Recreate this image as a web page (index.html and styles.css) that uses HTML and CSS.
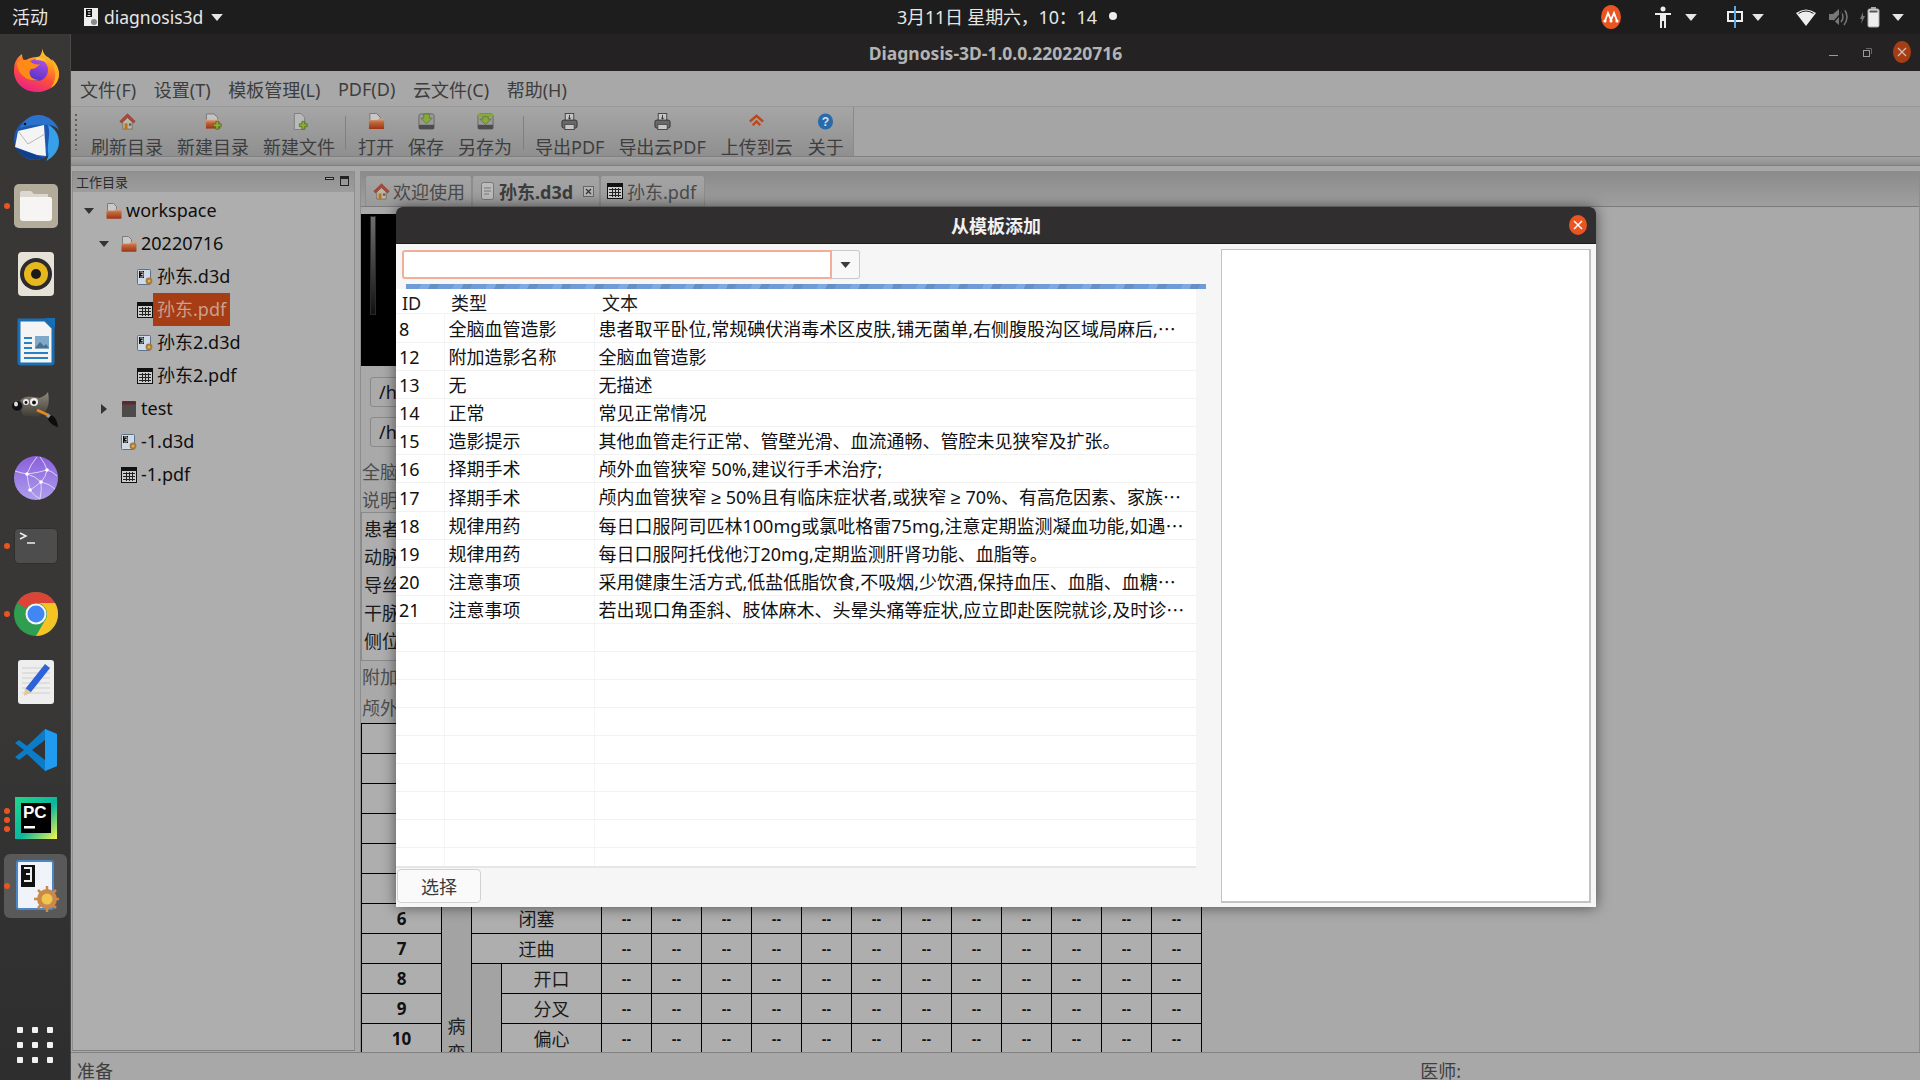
FILE: index.html
```html
<!DOCTYPE html>
<html lang="zh-CN">
<head>
<meta charset="utf-8">
<title>Diagnosis-3D</title>
<link rel="stylesheet" href="styles.css">
</head>
<body>
<svg class="defs" width="0" height="0">
  <defs>
    <linearGradient id="g-fold" x1="0" y1="0" x2="0" y2="1"><stop offset="0" stop-color="#d9a88c"/><stop offset=".35" stop-color="#c0683c"/><stop offset="1" stop-color="#9c3414"/></linearGradient>
    <symbol id="i-folder" viewBox="0 0 16 16">
      <path d="M1.500.5h6l3 3v5h-9z" fill="#c9c9c9" stroke="#7c7c7c"/>
      <path d="M.5 7.500h8l1-1.500h6v9a.8.8 0 0 1-.8.8H1.300a.8.8 0 0 1-.8-.8z" fill="url(#g-fold)"/>
    </symbol>
    <symbol id="i-d3d" viewBox="0 0 16 16">
      <rect x=".5" y=".5" width="13" height="15" rx="1" fill="#cfdbe6" stroke="#5c7088"/>
      <rect x="2" y="2" width="5" height="7" fill="#111"/>
      <path d="M3 3h3v5H3M4 5.500h2" stroke="#ddd" fill="none" stroke-width=".8"/>
      <circle cx="12" cy="12" r="3.400" fill="#a8793a"/>
      <circle cx="12" cy="12" r="1.500" fill="#d9b060"/>
    </symbol>
    <symbol id="i-pdf" viewBox="0 0 16 16">
      <rect x=".5" y=".5" width="15" height="15" fill="#ccc" stroke="#111"/>
      <rect x="1" y="1" width="14" height="3" fill="#111"/>
      <path d="M2 6.500h12M2 9.500h12M2 12.500h12M5.500 5v9M8.500 5v9M11.500 5v9" stroke="#222" fill="none"/>
    </symbol>
    <symbol id="i-home" viewBox="0 0 18 18">
      <path d="M4 9.500 9 5l5 4.500V17H4z" fill="#bdb5a5" stroke="#6e675c" stroke-width=".8"/>
      <path d="M9 .8.800 8.800l1.800 1.700L9 4.600l6.400 5.900 1.800-1.700z" fill="#b0453a" stroke="#8a3026" stroke-width=".5"/>
      <rect x="6" y="11" width="3" height="6" fill="#b8741a"/>
      <rect x="10.500" y="11" width="2.500" height="2.500" fill="#5e5e5e"/>
    </symbol>
    <symbol id="i-plus" viewBox="0 0 10 10">
      <path d="M3.500.8h3v2.700h2.700v3H6.500v2.700h-3V6.500H.8v-3h2.700z" fill="#8fa83a" stroke="#4e6a18" stroke-width=".8"/>
    </symbol>
    <symbol id="i-printer" viewBox="0 0 18 18">
      <rect x="4.500" y=".5" width="9" height="8" fill="#c6c6c6" stroke="#444"/>
      <rect x="1" y="7.500" width="16" height="8.500" rx="2" fill="#6a6a6a" stroke="#333"/>
      <rect x="4" y="12" width="10" height="5.500" fill="#c6c6c6" stroke="#444"/>
      <path d="M9 2v4.500M7.500 5 9 6.500 10.500 5" stroke="#333" fill="none"/>
    </symbol>
    <symbol id="i-arrow" viewBox="0 0 10 6">
      <path d="M0 0h10L5 6z"/>
    </symbol>
  </defs>
</svg>

<header class="topbar">
  <span class="activities">活动</span>
  <span class="app-menu">
    <svg class="app-icon" width="14" height="18" viewBox="0 0 14 18"><rect width="14" height="18" fill="#eee"/><rect x="2" y="1" width="6" height="8" fill="#111"/><path d="M3.500 2.500h3M4 5h2.500M3.500 7.500h3" stroke="#eee" fill="none"/><circle cx="10" cy="14" r="3" fill="#8a8a8a"/></svg>
    <span class="app-name">diagnosis3d</span>
    <svg class="caret" width="12" height="7"><use href="#i-arrow"/></svg>
  </span>
  <span class="clock">3月11日 星期六，10：14<i class="clock-dot"></i></span>
  <span class="tray">
    <svg class="tray-m" width="20" height="24" viewBox="0 0 20 24"><ellipse cx="10" cy="12" rx="10" ry="12" fill="#e95420"/><path d="M4 16 7 8l3 7 3-7 3 8" stroke="#fff" stroke-width="1.800" fill="none"/><path d="M7 8l3 7M13 8l-3 7" stroke="#fff" stroke-width="1"/><circle cx="4" cy="16" r="1.600" fill="#fff"/><circle cx="10" cy="16" r="1.600" fill="#fff"/><circle cx="16" cy="16" r="1.600" fill="#fff"/></svg>
    <svg class="tray-a" width="16" height="22" viewBox="0 0 16 22"><circle cx="8" cy="3" r="2.500" fill="#eee"/><path d="M0 7h16v2h-5v13H9v-7H7v7H5V9H0z" fill="#eee"/></svg>
    <svg class="caret" width="12" height="7"><use href="#i-arrow"/></svg>
    <svg class="tray-zh" width="16" height="22" viewBox="0 0 16 22"><rect x="1" y="6" width="14" height="9" fill="none" stroke="#eee" stroke-width="2"/><path d="M8 0v22" stroke="#5aa9e6" stroke-width="2"/></svg>
    <svg class="caret" width="12" height="7"><use href="#i-arrow"/></svg>
    <svg class="tray-w" width="20" height="18" viewBox="0 0 20 18"><path d="M0 5Q10-2 20 5L10 18z" fill="#eee"/><path d="M2.500 5.500Q10 .5 17.500 5.500" stroke="#1d1d1d" fill="none"/></svg>
    <svg class="tray-v" width="20" height="20" viewBox="0 0 20 20"><path d="M0 7h4l6-5v16l-6-5H0z" fill="#777"/><path d="M12 5q4 5 0 10M15 2q6 8 0 16" stroke="#777" stroke-width="1.500" fill="none"/><path d="M1 19 17 1" stroke="#1d1d1d" stroke-width="1.500"/></svg>
    <svg class="tray-b" width="22" height="22" viewBox="0 0 22 22"><path d="M4 6 1 13h2l-1 5 4-8H4z" fill="#777"/><rect x="9" y="3" width="11" height="18" rx="1.500" fill="#eee" stroke="#aaa"/><rect x="12" y="1" width="5" height="2" fill="#aaa"/><rect x="10.500" y="4.500" width="8" height="2" fill="#555"/></svg>
    <svg class="caret" width="12" height="7"><use href="#i-arrow"/></svg>
  </span>
</header>

<div class="desk">
  <nav class="dock">
    <div class="dock-item dock-first">
      <svg width="45" height="46" viewBox="0 0 45 46">
        <defs>
          <linearGradient id="ff" x1=".75" y1="0" x2=".35" y2="1"><stop offset="0" stop-color="#ffe04a"/><stop offset=".35" stop-color="#ff9a1e"/><stop offset=".65" stop-color="#ff4f3a"/><stop offset="1" stop-color="#e8208a"/></linearGradient>
          <linearGradient id="ff2" x1=".6" y1="0" x2=".3" y2="1"><stop offset="0" stop-color="#ab4fe0"/><stop offset="1" stop-color="#5330c8"/></linearGradient>
        </defs>
        <path d="M29 0c-1 4 0 7 3 10 7 4 12 10 13 18 0 10-10 18-22 18C10 46 0 37 0 25c0-6 1-9 3-12 1-2 5-5 5-5 0 3 1 6 3 7 3-3 8-4 12-4 3 0 5-3 6-11z" fill="url(#ff)"/>
        <path d="M38 13c5 5 7 10 7 15 0 6-3 11-8 14 3-5 5-10 4-16-1-4-2-9-3-13z" fill="#ffb31f"/>
        <circle cx="23" cy="24" r="11" fill="url(#ff2)"/>
        <path d="M3 17c5-4 11-4 14-1 2 2 6 3 9 2-2 3-6 5-9 5-2 2-2 5 0 8 2 2 5 3 8 3-8 2-16-2-20-9-1-3-2-5-2-8z" fill="#ff8a18"/>
        <path d="M23 11c4 0 9 2 11 6-3-2-8-3-12-3-1-1 0-2 1-3z" fill="#ffc12e"/>
      </svg>
    </div>
    <div class="dock-item">
      <svg width="48" height="48" viewBox="0 0 48 48">
        <circle cx="23" cy="25" r="21" fill="#1c57b0"/>
        <path d="M8 14C11 6 19 0 28 1c9 1 16 7 19 15-4-4-9-6-14-5-8-1-17 0-25 3z" fill="#2a72cc"/>
        <path d="M36 11c7 3 11 10 11 17 0 8-5 15-13 19 2-3 3-6 2-9-1-9 3-18 0-27z" fill="#36a0e8"/>
        <path d="M6 17l26-6 2 31-9-1L3 33z" fill="#f4f4f4"/>
        <path d="M6 17l10 13 17-10" stroke="#b8b8b8" fill="none"/>
        <circle cx="13" cy="10" r="1.300" fill="#111"/>
        <path d="M4 35c4 6 11 10 20 11l8-2-8-3-20-7z" fill="#123f8c"/>
      </svg>
    </div>
    <div class="dock-item active-dot">
      <svg width="44" height="44" viewBox="0 0 44 44">
        <rect width="44" height="44" rx="5" fill="#b3ac9b"/>
        <path d="M6 9a2 2 0 0 1 2-2h9l3 3h14v6H6z" fill="#dcd8d0"/>
        <path d="M6 13h30a2 2 0 0 1 2 2v19a3 3 0 0 1-3 3H9a3 3 0 0 1-3-3z" fill="#f6f5f3"/>
      </svg>
    </div>
    <div class="dock-item">
      <svg width="36" height="44" viewBox="0 0 36 44">
        <rect width="36" height="44" rx="4" fill="#e6e2d8"/>
        <circle cx="18" cy="22" r="16" fill="#2b2b2b"/>
        <circle cx="18" cy="22" r="12" fill="#e6b81e"/>
        <circle cx="18" cy="22" r="5" fill="#1a1a1a"/>
      </svg>
    </div>
    <div class="dock-item">
      <svg width="38" height="48" viewBox="0 0 38 48">
        <path d="M2 2h26l8 8v34a2 2 0 0 1-2 2H4a2 2 0 0 1-2-2z" fill="#f4f4f4" stroke="#1a6fb4" stroke-width="3"/>
        <path d="M28 0h10v10z" fill="#1a6fb4"/>
        <path d="M7 20h8M7 25h8M7 30h8M7 35h24M7 40h24" stroke="#2b7fc2" stroke-width="2"/>
        <rect x="18" y="18" width="14" height="13" fill="#7fa9c9"/>
        <path d="M18 30l5-6 4 4 2-2 3 4z" fill="#4a6f8e"/>
      </svg>
    </div>
    <div class="dock-item">
      <svg width="48" height="36" viewBox="0 0 48 36">
        <defs><linearGradient id="gm" x1="0" y1="0" x2="0" y2="1"><stop offset="0" stop-color="#8f897a"/><stop offset="1" stop-color="#3e3c36"/></linearGradient></defs>
        <path d="M8 9C12 3 22 5 27 6c4-1 7-3 9-6 1 6 2 13-3 20-6 6-17 6-23 2z" fill="url(#gm)"/>
        <circle cx="5" cy="14" r="5.500" fill="#111" stroke="#444"/>
        <ellipse cx="4" cy="12" rx="2" ry="2.500" fill="#ddd"/>
        <circle cx="14" cy="10" r="3" fill="#e8e8e8"/><circle cx="14" cy="10.500" r="1.400" fill="#111"/>
        <circle cx="22" cy="10" r="4" fill="#eee"/><circle cx="22" cy="10.500" r="1.900" fill="#111"/>
        <path d="M25 18l11 5" stroke="#e08a1e" stroke-width="3"/>
        <path d="M35 23l5 3" stroke="#999" stroke-width="3.500"/>
        <path d="M39 23c3 1 6 4 7 12-5-1-9-5-10-8z" fill="#0d0d0d"/>
      </svg>
    </div>
    <div class="dock-item">
      <svg width="44" height="44" viewBox="0 0 44 44">
        <defs><linearGradient id="net" x1="0" y1="0" x2="0" y2="1"><stop offset="0" stop-color="#8a5fdb"/><stop offset="1" stop-color="#ae9eee"/></linearGradient></defs>
        <circle cx="22" cy="22" r="22" fill="url(#net)"/>
        <path d="M1 15q6 2 12 3 10-1 20-4 5 1 10 6M13 18q3-9 10-17M33 14q-2-7-7-13M13 18q1 9 3 16M33 14q-1 7-6 12Q21 31 16 34M13 18q8 2 14 8 9 2 14 7M16 34q4 6 10 9M27 26q1 8-1 17" stroke="#e4dff4" stroke-width=".9" fill="none"/>
        <circle cx="13" cy="18" r="1.800" fill="#fff"/><circle cx="33" cy="14" r="1.800" fill="#fff"/><circle cx="27" cy="26" r="1.800" fill="#fff"/><circle cx="16" cy="34" r="1.800" fill="#fff"/>
      </svg>
    </div>
    <div class="dock-item active-dot">
      <svg width="44" height="36" viewBox="0 0 44 36">
        <rect x=".5" y=".5" width="43" height="35" rx="4" fill="#4d4d4d" stroke="#2f2f2f"/>
        <path d="M6 5l6 3-6 3" stroke="#eee" stroke-width="1.500" fill="none"/>
        <path d="M13 15h8" stroke="#eee" stroke-width="1.500"/>
      </svg>
    </div>
    <div class="dock-item active-dot">
      <svg width="44" height="44" viewBox="0 0 44 44">
        <circle cx="22" cy="22" r="22" fill="#2f9e50"/>
        <path d="M22 0a22 22 0 0 1 19.050 11H22a11 11 0 0 0-9.530 5.500L2.950 11A22 22 0 0 1 22 0z" fill="#db4437"/>
        <path d="M22 11h19.050A22 22 0 0 1 22 44l9.530-16.500A11 11 0 0 0 22 11z" fill="#f6c324"/>
        <circle cx="22" cy="22" r="10.500" fill="#f5f5f5"/>
        <circle cx="22" cy="22" r="8.500" fill="#4285f4"/>
      </svg>
    </div>
    <div class="dock-item">
      <svg width="36" height="44" viewBox="0 0 36 44">
        <rect width="36" height="44" rx="3" fill="#eee"/>
        <path d="M4 8h28M4 13h28M4 18h28M4 23h28M4 28h28M4 33h28" stroke="#cfcfcf"/>
        <path d="M27 4l5 4-19 24-6 3 1-7z" fill="#2d62d8"/>
        <path d="M7 28l6 4-7 4z" fill="#e7c89a"/>
      </svg>
    </div>
    <div class="dock-item">
      <svg width="42" height="42" viewBox="0 0 42 42">
        <path d="M30 0 42 5v32l-12 5L12 25 4 31 0 28l9-7-9-7 4-3 8 6z" fill="#0a7cc8"/>
        <path d="M30 0 42 5v32l-12 5z" fill="#1f9cf0"/>
        <path d="M30 11v20l-13-10z" fill="#333"/>
      </svg>
    </div>
    <div class="dock-item dots-3">
      <svg width="42" height="42" viewBox="0 0 42 42">
        <defs><linearGradient id="pc" x1="0" y1="0" x2="1" y2="1"><stop offset="0" stop-color="#21d789"/><stop offset=".55" stop-color="#09b6a0"/><stop offset="1" stop-color="#fcf84a"/></linearGradient></defs>
        <rect width="42" height="42" fill="url(#pc)"/>
        <rect x="6" y="6" width="30" height="30" fill="#000"/>
        <text x="8" y="21" class="pc-text">PC</text>
        <rect x="9" y="29" width="11" height="2.500" fill="#fff"/>
      </svg>
    </div>
    <div class="dock-item dock-active active-dot">
      <svg width="44" height="54" viewBox="0 0 44 54">
        <rect x="2" y="2" width="36" height="48" rx="2" fill="#f0f4fa" stroke="#4a86c8" stroke-width="2"/>
        <rect x="6" y="6" width="14" height="22" fill="#111"/>
        <path d="M9 9h7v13H9M11 15h5" stroke="#eee" stroke-width="2" fill="none"/>
        <circle cx="32" cy="40" r="10" fill="#c9894a"/>
        <circle cx="32" cy="40" r="5.500" fill="#f2c550"/>
        <path d="M32 27v6M32 47v6M19 40h6M39 40h5M23 31l4 4M37 45l4 4M41 31l-4 4M27 45l-4 4" stroke="#c9894a" stroke-width="2.500"/>
      </svg>
    </div>
    <div class="dock-grid" aria-hidden="true">
      <i></i><i></i><i></i><i></i><i></i><i></i><i></i><i></i><i></i>
    </div>
  </nav>

  <main class="window">
    <div class="titlebar">
      <span class="title">Diagnosis-3D-1.0.0.220220716</span>
      <span class="wm-buttons">
        <i class="wm-min"></i>
        <svg class="wm-max" width="9" height="9" viewBox="0 0 9 9"><rect x=".5" y="2.500" width="6" height="6" fill="none" stroke="#9a9a9a"/><path d="M3 .5h5.500V6" fill="none" stroke="#666"/></svg>
        <svg class="wm-close" width="18" height="22" viewBox="0 0 18 22"><ellipse cx="9" cy="11" rx="9" ry="11" fill="#a63d14"/><path d="M5 7l8 8M13 7l-8 8" stroke="#c9c0ba" stroke-width="1.300"/></svg>
      </span>
    </div>

    <div class="menubar">
      <span>文件(F)</span><span>设置(T)</span><span>模板管理(L)</span><span>PDF(D)</span><span>云文件(C)</span><span>帮助(H)</span>
    </div>

    <div class="toolrow">
      <div class="toolbar">
        <i class="handle"></i>
        <div class="tool"><svg viewBox="0 0 18 18"><use href="#i-home"/></svg><span>刷新目录</span></div>
        <div class="tool"><svg viewBox="0 0 18 18"><path d="M1.500 1h8l4 4v4h-12z" fill="#c3c3c3" stroke="#777"/><path d="M1 7h15v9.500H1z" fill="url(#g-fold)"/><use href="#i-plus" x="8" y="8" width="10" height="10"/></svg><span>新建目录</span></div>
        <div class="tool"><svg viewBox="0 0 18 18"><path d="M3.500.5h7l4 4v13h-11z" fill="#b9b9b9" stroke="#7d7d7d"/><use href="#i-plus" x="8" y="8" width="10" height="10"/></svg><span>新建文件</span></div>
        <i class="tool-sep"></i>
        <div class="tool"><svg viewBox="0 0 18 18"><path d="M2 .5h7l4 4v5H2z" fill="#c8c8c8" stroke="#777"/><path d="M1 7.500h9l1-1.500h6v11H1z" fill="url(#g-fold)"/></svg><span>打开</span></div>
        <div class="tool"><svg viewBox="0 0 18 18"><rect x="1" y="1" width="16" height="16" rx="2" fill="#9a9a9a" stroke="#666"/><rect x="1" y="12.500" width="16" height="4.500" fill="#4c4c4c"/><path d="M6 1h6v4.500h3L9 11.500 3 5.500h3z" fill="#86a83c" stroke="#4e6a18" stroke-width=".6"/></svg><span>保存</span></div>
        <div class="tool"><svg viewBox="0 0 18 18"><rect x="1" y="1" width="16" height="16" rx="2" fill="#9a9a9a" stroke="#666"/><rect x="1" y="12.500" width="16" height="4.500" fill="#4c4c4c"/><rect x="1" y="1" width="16" height="3" fill="#86a83c"/><path d="M6 4h6v2.500h3L9 12 3 6.500h3z" fill="#86a83c" stroke="#4e6a18" stroke-width=".6"/></svg><span>另存为</span></div>
        <i class="tool-sep sep-b"></i>
        <div class="tool"><svg viewBox="0 0 18 18"><use href="#i-printer"/></svg><span>导出PDF</span></div>
        <div class="tool"><svg viewBox="0 0 18 18"><use href="#i-printer"/></svg><span>导出云PDF</span></div>
        <div class="tool tool-nudge"><svg viewBox="0 0 18 18"><path d="M2 9l7-6 7 6M5 13l4-4 4 4" stroke="#b9481c" stroke-width="2.500" fill="none"/></svg><span>上传到云</span></div>
        <div class="tool tool-nudge"><svg viewBox="0 0 18 18"><ellipse cx="9" cy="9" rx="8" ry="8.500" fill="#2a6aa8"/><text x="9" y="14" class="q-text">?</text></svg><span>关于</span></div>
      </div>
    </div>
    <div class="strip"></div>

    <div class="panes">
      <aside class="side">
        <div class="side-head">
          <span>工作目录</span>
          <span class="side-btns"><i class="btn-min"></i><i class="btn-max"></i></span>
        </div>
        <ul class="tree">
          <li class="row lv0"><i class="tw open"></i><svg width="16" height="16"><use href="#i-folder"/></svg><span class="lbl">workspace</span></li>
          <li class="row lv1"><i class="tw open"></i><svg width="16" height="16"><use href="#i-folder"/></svg><span class="lbl">20220716</span></li>
          <li class="row lv2"><i class="tw"></i><svg width="16" height="16"><use href="#i-d3d"/></svg><span class="lbl">孙东.d3d</span></li>
          <li class="row lv2"><i class="tw"></i><svg width="16" height="16"><use href="#i-pdf"/></svg><span class="lbl sel">孙东.pdf</span></li>
          <li class="row lv2"><i class="tw"></i><svg width="16" height="16"><use href="#i-d3d"/></svg><span class="lbl">孙东2.d3d</span></li>
          <li class="row lv2"><i class="tw"></i><svg width="16" height="16"><use href="#i-pdf"/></svg><span class="lbl">孙东2.pdf</span></li>
          <li class="row lv1"><i class="tw closed"></i><svg width="16" height="18" viewBox="0 0 16 18"><path d="M1 2h12l2 2v13H1z" fill="#4e4a4a"/><rect x="1" y="1" width="14" height="3.500" rx="1" fill="#5a2a30"/></svg><span class="lbl">test</span></li>
          <li class="row lv1"><i class="tw"></i><svg width="16" height="16"><use href="#i-d3d"/></svg><span class="lbl">-1.d3d</span></li>
          <li class="row lv1"><i class="tw"></i><svg width="16" height="16"><use href="#i-pdf"/></svg><span class="lbl">-1.pdf</span></li>
        </ul>
      </aside>

      <section class="editor">
        <div class="tabs">
          <div class="tab t1"><svg width="17" height="17" viewBox="0 0 18 18"><use href="#i-home"/></svg><span>欢迎使用</span></div>
          <div class="tab t2"><svg width="13" height="18" viewBox="0 0 13 18"><rect x=".5" y=".5" width="12" height="17" rx="2" fill="#bbb" stroke="#777"/><path d="M3 6h7M3 9h7M3 12h5" stroke="#777"/></svg><b>孙东.d3d</b><svg class="tab-x" width="11" height="11" viewBox="0 0 11 11"><rect x=".5" y=".5" width="10" height="10" fill="#b5b5b5" stroke="#666"/><path d="M3 3l5 5M8 3l-5 5" stroke="#333" stroke-width="1.300"/></svg></div>
          <div class="tab t3"><svg width="16" height="16"><use href="#i-pdf"/></svg><span>孙东.pdf</span></div>
        </div>
        <div class="doc">
          <div class="viewer"><i class="slider"></i></div>
          <div class="path-in">/home</div>
          <div class="path-in">/home</div>
          <div class="doc-label">全脑血管造影</div>
          <div class="doc-label">说明</div>
          <div class="doc-area">
            <p>患者取平卧位</p><p>动脉穿刺成功</p><p>导丝引导下</p><p>干脉造影</p><p>侧位造影</p>
          </div>
          <div class="doc-label">附加造影</div>
          <div class="doc-label">颅外血管</div>
          <table class="grid">
            <colgroup>
              <col class="c-n"><col class="c-g"><col class="c-s"><col class="c-t">
              <col class="c-v"><col class="c-v"><col class="c-v"><col class="c-v"><col class="c-v"><col class="c-v"><col class="c-v"><col class="c-v"><col class="c-v"><col class="c-v"><col class="c-v"><col class="c-v">
            </colgroup>
            <tr><th></th><th></th><th colspan="2"></th><td></td><td></td><td></td><td></td><td></td><td></td><td></td><td></td><td></td><td></td><td></td><td></td></tr>
            <tr><th>1</th><td class="merged" rowspan="10"><div class="merged-in">病<br>变</div></td><td colspan="2"></td><td>--</td><td>--</td><td>--</td><td>--</td><td>--</td><td>--</td><td>--</td><td>--</td><td>--</td><td>--</td><td>--</td><td>--</td></tr>
            <tr><th>2</th><td colspan="2"></td><td>--</td><td>--</td><td>--</td><td>--</td><td>--</td><td>--</td><td>--</td><td>--</td><td>--</td><td>--</td><td>--</td><td>--</td></tr>
            <tr><th>3</th><td colspan="2"></td><td>--</td><td>--</td><td>--</td><td>--</td><td>--</td><td>--</td><td>--</td><td>--</td><td>--</td><td>--</td><td>--</td><td>--</td></tr>
            <tr><th>4</th><td colspan="2"></td><td>--</td><td>--</td><td>--</td><td>--</td><td>--</td><td>--</td><td>--</td><td>--</td><td>--</td><td>--</td><td>--</td><td>--</td></tr>
            <tr><th>5</th><td colspan="2"></td><td>--</td><td>--</td><td>--</td><td>--</td><td>--</td><td>--</td><td>--</td><td>--</td><td>--</td><td>--</td><td>--</td><td>--</td></tr>
            <tr><th>6</th><td class="nm" colspan="2">闭塞</td><td>--</td><td>--</td><td>--</td><td>--</td><td>--</td><td>--</td><td>--</td><td>--</td><td>--</td><td>--</td><td>--</td><td>--</td></tr>
            <tr><th>7</th><td class="nm" colspan="2">迂曲</td><td>--</td><td>--</td><td>--</td><td>--</td><td>--</td><td>--</td><td>--</td><td>--</td><td>--</td><td>--</td><td>--</td><td>--</td></tr>
            <tr><th>8</th><td class="merged" rowspan="3"></td><td class="nm">开口</td><td>--</td><td>--</td><td>--</td><td>--</td><td>--</td><td>--</td><td>--</td><td>--</td><td>--</td><td>--</td><td>--</td><td>--</td></tr>
            <tr><th>9</th><td class="nm">分叉</td><td>--</td><td>--</td><td>--</td><td>--</td><td>--</td><td>--</td><td>--</td><td>--</td><td>--</td><td>--</td><td>--</td><td>--</td></tr>
            <tr><th>10</th><td class="nm">偏心</td><td>--</td><td>--</td><td>--</td><td>--</td><td>--</td><td>--</td><td>--</td><td>--</td><td>--</td><td>--</td><td>--</td><td>--</td></tr>
          </table>
        </div>
      </section>
    </div>

    <footer class="status"><span>准备</span><span class="doctor">医师:</span></footer>
  </main>
</div>

<div class="dialog">
  <div class="dlg-title">
    <span>从模板添加</span>
    <svg class="dlg-close" width="18" height="20" viewBox="0 0 18 20"><ellipse cx="9" cy="10" rx="9" ry="10" fill="#e95420"/><path d="M5 6l8 8M13 6l-8 8" stroke="#fff" stroke-width="1.500"/></svg>
  </div>
  <div class="dlg-body">
    <div class="dlg-left">
      <div class="combo">
        <div class="combo-input"></div>
        <div class="combo-btn"><svg width="11" height="6"><use href="#i-arrow"/></svg></div>
      </div>
      <div class="progress"></div>
      <div class="list">
        <table class="tpl">
          <colgroup><col class="k-id"><col class="k-type"><col class="k-text"></colgroup>
          <thead><tr><th>ID</th><th>类型</th><th>文本</th></tr></thead>
          <tbody>
            <tr><td>8</td><td>全脑血管造影</td><td>患者取平卧位,常规碘伏消毒术区皮肤,铺无菌单,右侧腹股沟区域局麻后,⋯</td></tr>
            <tr><td>12</td><td>附加造影名称</td><td>全脑血管造影</td></tr>
            <tr><td>13</td><td>无</td><td>无描述</td></tr>
            <tr><td>14</td><td>正常</td><td>常见正常情况</td></tr>
            <tr><td>15</td><td>造影提示</td><td>其他血管走行正常、管壁光滑、血流通畅、管腔未见狭窄及扩张。</td></tr>
            <tr><td>16</td><td>择期手术</td><td>颅外血管狭窄 50%,建议行手术治疗;</td></tr>
            <tr><td>17</td><td>择期手术</td><td>颅内血管狭窄 <span class="ge">≥</span> 50%且有临床症状者,或狭窄 <span class="ge">≥</span> 70%、有高危因素、家族⋯</td></tr>
            <tr><td>18</td><td>规律用药</td><td>每日口服阿司匹林100mg或氯吡格雷75mg,注意定期监测凝血功能,如遇⋯</td></tr>
            <tr><td>19</td><td>规律用药</td><td>每日口服阿托伐他汀20mg,定期监测肝肾功能、血脂等。</td></tr>
            <tr><td>20</td><td>注意事项</td><td>采用健康生活方式,低盐低脂饮食,不吸烟,少饮酒,保持血压、血脂、血糖⋯</td></tr>
            <tr><td>21</td><td>注意事项</td><td>若出现口角歪斜、肢体麻木、头晕头痛等症状,应立即赴医院就诊,及时诊⋯</td></tr>
            <tr><td></td><td></td><td></td></tr>
            <tr><td></td><td></td><td></td></tr>
            <tr><td></td><td></td><td></td></tr>
            <tr><td></td><td></td><td></td></tr>
            <tr><td></td><td></td><td></td></tr>
            <tr><td></td><td></td><td></td></tr>
            <tr><td></td><td></td><td></td></tr>
            <tr><td></td><td></td><td></td></tr>
            <tr><td></td><td></td><td></td></tr>
          </tbody>
        </table>
      </div>
      <div class="dlg-actions"><button class="choose" type="button">选择</button></div>
    </div>
    <div class="preview"></div>
  </div>
</div>
</body>
</html>
```

FILE: styles.css
```css
* { box-sizing: border-box; }
html, body { margin: 0; padding: 0; }
body {
  width: 1920px;
  height: 1080px;
  overflow: hidden;
  position: relative;
  background: #1d1d1d;
  font-family: "Noto Sans", "Noto Sans CJK SC", sans-serif;
  font-size: 18px;
  color: #111;
}
i { display: block; font-style: normal; }
.defs { position: absolute; }
svg { display: block; flex: none; }

/* top bar */
.topbar {
  height: 34px;
  background: #1d1d1d;
  color: #e6e6e6;
  display: flex;
  align-items: center;
  position: relative;
  line-height: 34px;
}
.activities { margin-left: 12px; width: 72px; }
.app-menu { display: flex; align-items: center; }
.app-icon { margin-right: 6px; }
.app-name { font-size: 17.5px; margin-right: 8px; }
.caret { fill: #e6e6e6; }
.clock {
  position: absolute;
  left: 897px;
  display: flex;
  align-items: center;
  letter-spacing: -0.2px;
}
.clock-dot {
  width: 8px; height: 8px; border-radius: 50%;
  background: #eee; margin-left: 12px; margin-top: -3px;
}
.tray { margin-left: auto; display: flex; align-items: center; padding-right: 16px; }
.tray-m { margin-right: 34px; }
.tray-a { margin-right: 14px; }
.tray-zh { margin-left: 30px; margin-right: 9px; }
.tray-w { margin-left: 32px; }
.tray-v { margin-left: 13px; }
.tray-b { margin-left: 10px; margin-right: 11px; }

/* desk */
.desk { display: flex; height: 1046px; }
.dock {
  width: 71px;
  flex: none;
  background: linear-gradient(180deg, #383736 0, #383736 65%, #323232 80%, #2f2e2e 100%);
  display: flex;
  flex-direction: column;
  padding-top: 2px;
  border-right: 1px solid #4a4a4a;
}
.dock-item {
  height: 68px;
  flex: none;
  display: flex;
  align-items: center;
  justify-content: center;
  position: relative;
  padding-left: 2px;
}
.dock-first { padding-bottom: 2px; }
.active-dot::before {
  content: "";
  position: absolute;
  left: 4px; top: 31px;
  width: 6px; height: 6px;
  border-radius: 50%;
  background: #e95420;
}
.dots-3::before {
  content: "";
  position: absolute;
  left: 4px; top: 24px;
  width: 6px; height: 6px;
  border-radius: 50%;
  background: #e95420;
  box-shadow: 0 9px 0 #e95420, 0 18px 0 #e95420;
}
.dock-active { background: #595959; border-radius: 6px; margin: 2px 3px 2px 4px; height: 64px; }
.dock-active::before { left: 0; top: 29px; }
.pc-text { font: 700 17px "Liberation Sans", sans-serif; fill: #fff; }
.q-text { font: 700 13px "Liberation Sans", sans-serif; fill: #cfe0f0; text-anchor: middle; }
.dock-grid {
  margin-top: auto;
  margin-bottom: 17px;
  align-self: center;
  display: grid;
  grid-template-columns: repeat(3, 6px);
  gap: 9px;
}
.dock-grid i { width: 6px; height: 6px; background: #f2f2f2; border-radius: 1px; }

/* window */
.window { flex: 1; display: flex; flex-direction: column; min-width: 0; background: #a8a8a8; }
.titlebar {
  height: 37px;
  background: #242223;
  position: relative;
  display: flex;
  align-items: center;
  justify-content: center;
}
.title { font-size: 17.5px; font-weight: 700; color: #b4b4b4; }
.wm-buttons {
  position: absolute;
  right: 9px; top: 7px;
  display: flex; align-items: center;
}
.wm-min { width: 9px; height: 1px; background: #9a9a9a; margin-right: 25px; margin-top: 6px; }
.wm-max { margin-right: 21px; }

.menubar {
  height: 36px;
  background: #a8a8a8;
  display: flex;
  align-items: center;
  gap: 17.6px;
  padding-left: 9px;
  color: #3d3d3d;
  border-bottom: 1px solid #989898;
}
.toolrow { height: 50px; background: #a5a5a5; border-bottom: 1px solid #808080; }
.toolbar {
  width: 783px;
  height: 49px;
  background: linear-gradient(180deg, #a6a6a6, #8f8f8f);
  border-right: 1px solid #8a8a8a;
  display: flex;
  align-items: flex-start;
  color: #3e3e3e;
}
.handle { width: 13px; height: 36px; margin-top: 7px; background: repeating-linear-gradient(180deg, #5e5e5e 0 2px, transparent 2px 5px) 4px 0 / 2px 100% no-repeat; }
.tool { padding: 6px 7px 0; display: flex; flex-direction: column; align-items: center; height: 49px; white-space: nowrap; }
.tool-nudge { margin-left: 1px; }
.tool svg { width: 17px; height: 17px; }
.tool span { line-height: 24px; margin-top: 5px; }
.tool-sep { width: 1px; height: 34px; margin: 9px 5px 0 3px; background: #808080; }
.sep-b { margin-left: 4px; margin-right: 4px; }
.strip {
  height: 9px;
  background: linear-gradient(180deg, #a2a2a2, #8f8f8f);
  border-bottom: 1px solid #7f7f7f;
}

.panes { flex: 1; display: flex; min-height: 0; padding-top: 5px; gap: 5px; padding-left: 1px; }
.side {
  width: 283px;
  flex: none;
  background: #aeaeae;
  border: 1px solid #8d8d8d;
  border-bottom-color: #808080;
  margin-bottom: 1px;
}
.side-head {
  height: 20px;
  background: linear-gradient(180deg, #919191, #9d9d9d);
  display: flex;
  align-items: center;
  justify-content: space-between;
  padding: 0 5px 2px 3px;
  font-size: 13px;
  color: #2a2a2a;
}
.side-btns { display: flex; align-items: center; gap: 6px; }
.btn-min { width: 9px; height: 3px; border: 1px solid #222; background: #aaa; margin-top: -6px; }
.btn-max { width: 9px; height: 10px; border: 1px solid #222; border-top-width: 3px; }
.tree { list-style: none; margin: 2px 0 0; padding: 0; }
.row { height: 33px; display: flex; align-items: center; }
.lv0 { padding-left: 7px; }
.lv1 { padding-left: 22px; }
.lv2 { padding-left: 38px; }
.tw { width: 26px; height: 10px; flex: none; position: relative; }
.tw.open::before {
  content: ""; position: absolute; left: 4px; top: 2px;
  border-left: 5px solid transparent; border-right: 5px solid transparent; border-top: 6px solid #333;
}
.tw.closed::before {
  content: ""; position: absolute; left: 6px; top: 0;
  border-top: 5px solid transparent; border-bottom: 5px solid transparent; border-left: 6px solid #333;
}
.lbl { padding: 0 4px; height: 33px; line-height: 33px; white-space: nowrap; color: #0f0f0f; }
.lbl.sel { background: #a63d14; color: #caa090; }

/* editor */
.editor { flex: 1; min-width: 0; border: 1px solid #8d8d8d; border-bottom: 0; display: flex; flex-direction: column; }
.tabs {
  height: 35px;
  flex: none;
  background: linear-gradient(180deg, #8b8b8b, #9f9f9f);
  border-bottom: 1px solid #7b7b7b;
  display: flex;
  align-items: flex-end;
  padding-left: 4px;
  box-shadow: 0 2px 0 #9a9a9a, 0 3px 0 #7e7e7e;
}
.tab {
  height: 31px;
  display: flex;
  align-items: center;
  border: 1px solid #8c8c8c;
  border-bottom: 0;
  border-radius: 3px 3px 0 0;
  background: linear-gradient(180deg, #a4a4a4, #9a9a9a);
  color: #4a4a4a;
  white-space: nowrap;
  flex: none;
}
.t1 { width: 107px; padding-left: 7px; gap: 3px; }
.t2 { width: 128px; padding-left: 8px; gap: 5px; color: #3c3c3c; }
.t2 b { font-weight: 700; }
.tab-x { margin-left: auto; margin-right: 5px; }
.t3 { width: 105px; padding-left: 6px; gap: 4px; }

.doc { flex: 1; min-height: 0; overflow: hidden; background: #a9a9a9; padding-top: 7px; }
.viewer { width: 600px; height: 152px; background: #000; position: relative; }
.slider {
  position: absolute; left: 9px; top: 2px;
  width: 6px; height: 99px;
  background: linear-gradient(180deg, #6e6e6e, #111);
  border: 1px solid #2a2a2a;
}
.path-in {
  width: 400px; height: 30px;
  margin: 11px 0 0 9px;
  border: 1px solid #8a8a8a;
  border-radius: 3px;
  padding-left: 8px;
  line-height: 28px;
  color: #111;
  background: #aaa;
}
.path-in + .path-in { margin-top: 10px; }
.doc-label { height: 28px; line-height: 28px; padding-left: 1px; color: #4d4d4d; white-space: nowrap; }
.path-in + .doc-label { margin-top: 11px; }
.doc-area {
  width: 600px;
  height: 149px;
  margin-top: -2px;
  border: 1px solid #8a8a8a;
  padding: 2px 0 0 2px;
  background: #aeaeae;
  color: #1a1a1a;
}
.doc-area p { margin: 0; height: 28px; line-height: 28px; white-space: nowrap; }
.doc-area + .doc-label { margin-top: 2px; }
.doc-area + .doc-label + .doc-label { margin-top: 3px; }

.grid {
  width: 840px;
  margin-top: 1px;
  table-layout: fixed;
  border-collapse: collapse;
  background: #aeaeae;
}
.c-n { width: 80px; }
.c-g { width: 30px; }
.c-s { width: 30px; }
.c-t { width: 100px; }
.c-v { width: 50px; }
.grid tr { height: 30px; }
.grid th, .grid td {
  border: 1px solid #000;
  padding: 0;
  text-align: center;
  vertical-align: middle;
  font: 700 14px/20px "Liberation Sans", sans-serif;
  color: #111;
  background: #aeaeae;
}
.grid th { font: 700 17px/20px "Noto Sans", sans-serif; }
.grid td.nm { font: 400 18px/20px "Noto Sans", "Noto Sans CJK SC", sans-serif; color: #1a1a1a; }
.grid td.merged { background: #a3a3a3; vertical-align: top; font: 400 18px/27px "Noto Sans CJK SC", sans-serif; color: #222; }
.merged-in { height: 298px; padding-top: 258px; }

/* status */
.status {
  height: 28px;
  flex: none;
  background: #a8a8a8;
  border-top: 1px solid #828282;
  display: flex;
  justify-content: space-between;
  padding: 0 0 0 6px;
  line-height: 36px;
  color: #3e3e3e;
  overflow: hidden;
}
.doctor { margin-right: 459px; }

/* dialog */
.dialog {
  position: absolute;
  left: 396px; top: 207px;
  width: 1200px; height: 700px;
  background: #f6f6f6;
  border-radius: 6px 6px 0 0;
  box-shadow: 0 0 14px rgba(0, 0, 0, .55);
  display: flex;
  flex-direction: column;
  overflow: hidden;
}
.dlg-title {
  height: 37px;
  flex: none;
  background: #302e2f;
  color: #f0f0f0;
  font-weight: 700;
  display: flex;
  align-items: center;
  justify-content: center;
  position: relative;
  border-bottom: 1px solid #1c1c1c;
}
.dlg-close { position: absolute; right: 9px; top: 8px; }
.dlg-body { flex: 1; display: flex; min-height: 0; }
.dlg-left { width: 800px; flex: none; display: flex; flex-direction: column; }
.combo { display: flex; height: 29px; margin: 6px 0 0 6px; width: 458px; flex: none; }
.combo-input { flex: 1; border: 2px solid #f2ae98; border-radius: 3px 0 0 3px; background: #fff; height: 29px; }
.combo-btn {
  width: 28px; height: 29px;
  border: 1px solid #c9c9c9; border-left: 0;
  border-radius: 0 3px 3px 0;
  background: #f8f8f8;
  display: flex; align-items: center; justify-content: center;
  fill: #3c3c3c;
}
.progress {
  width: 800px;
  height: 5px;
  flex: none;
  margin: 5px 0 0 10px;
  background: repeating-linear-gradient(115deg, #6f9bd6 0 14px, #7fa9e2 14px 22px, #688fc4 22px 30px);
}
.list { height: 579px; flex: none; background: #fff; overflow: hidden; border-bottom: 2px solid #e6e6e6; }
.tpl { width: 800px; table-layout: fixed; border-collapse: collapse; }
.k-id { width: 48px; }
.k-type { width: 150px; }
.tpl th {
  height: 24px;
  text-align: left;
  font-weight: 400;
  padding: 4px 0 0 6px;
  line-height: 20px;
  color: #1a1a1a;
  border-bottom: 1px solid #f2f2f2;
}
.tpl th:nth-child(2) { padding-left: 7px; }
.tpl th:nth-child(3) { padding-left: 8px; }
.tpl td {
  height: 28px;
  padding: 1px 0 0 4px;
  line-height: 26px;
  white-space: nowrap;
  overflow: hidden;
  color: #111;
  border-bottom: 1px solid #f2f2f2;
  border-left: 1px solid #f5f5f5;
}
.tpl td:first-child { border-left: 0; padding-left: 3px; }
.tpl tbody tr:first-child td { height: 29px; }
.ge { font-family: "Liberation Sans", sans-serif; }
.dlg-actions { flex: 1; padding: 1px 0 0 1px; }
.choose {
  width: 84px; height: 34px;
  border: 1px solid #d2d2d2;
  border-radius: 4px;
  background: #fafafa;
  font: 18px "Noto Sans", "Noto Sans CJK SC", sans-serif;
  color: #3c3c3c;
  padding: 0;
}
.preview {
  width: 370px;
  height: 654px;
  margin: 5px 0 0 25px;
  background: #fff;
  border: 2px solid #c2c2c2;
  border-width: 1px 2px 2px 1px;
}
```
